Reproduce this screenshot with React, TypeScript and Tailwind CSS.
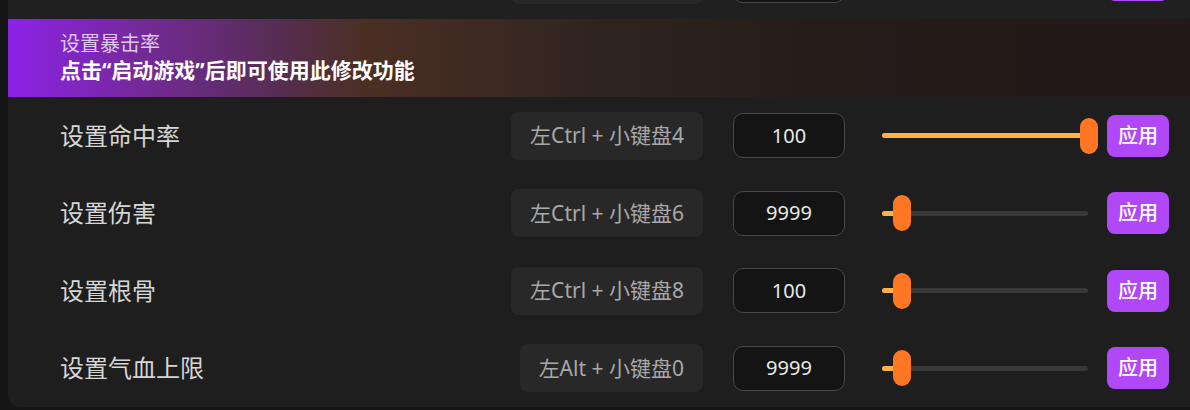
const rows = [
  { label: "设置命中率", keys: "左Ctrl + 小键盘4", value: "100", pos: 198 },
  { label: "设置伤害", keys: "左Ctrl + 小键盘6", value: "9999", pos: 11 },
  { label: "设置根骨", keys: "左Ctrl + 小键盘8", value: "100", pos: 11 },
  { label: "设置气血上限", keys: "左Alt + 小键盘0", value: "9999", pos: 11 },
];

function Row({ label, keys, value, pos }: { label: string; keys: string; value: string; pos: number }) {
  return (
    <div className="flex h-[77.5px] items-center pl-[52px] pr-[21px]">
      <div className="flex-1 text-[24px] text-[#d6d6d6]">{label}</div>
      <div className="flex h-[48px] items-center rounded-[8px] bg-[#282828] px-[19px] text-[21px] text-[#a8a8a8]">
        {keys}
      </div>
      <div className="ml-[30px] flex h-[45px] w-[112px] items-center justify-center rounded-[10px] border border-[#484848] bg-[#141414] text-[20px] text-[#e8e8e8]">
        {value}
      </div>
      {/* slider */}
      <div className="relative ml-[37px] flex h-[36px] w-[206px] items-center">
        <div className="h-[5px] w-full rounded-full bg-[#383838]">
          <div className="h-full rounded-full bg-[#ffb347]" style={{ width: pos + 9 }} />
        </div>
        <div className="absolute top-0 h-[36px] w-[18px] rounded-full bg-[#ff7722]" style={{ left: pos }} />
      </div>
      <button className="ml-[19px] flex h-[42px] w-[62px] items-center justify-center rounded-[8px] bg-[#b048f8] text-[20px] font-medium text-white">
        应用
      </button>
    </div>
  );
}

// bottom edge of the row above, scrolled out of view
function ClippedRow() {
  return (
    <div className="-mt-[58.5px] flex h-[77.5px] items-center bg-[#1f201f] pl-[52px] pr-[21px]">
      <div className="flex-1" />
      <div className="h-[48px] w-[192px] rounded-[8px] bg-[#282828]" />
      <div className="ml-[30px] h-[45px] w-[112px] rounded-[10px] border border-[#484848] bg-[#141414]" />
      <div className="ml-[37px] w-[206px]" />
      <div className="ml-[19px] h-[42px] w-[62px] rounded-[8px] bg-[#b048f8]" />
    </div>
  );
}

export default function App() {
  return (
    <div
      className="h-[410px] w-[1190px] overflow-hidden bg-[#151515]"
      style={{ fontFamily: '"Noto Sans", "Noto Sans CJK SC", sans-serif' }}
    >
      <div className="ml-[8px] h-[407px] overflow-hidden rounded-bl-[12px] bg-[#1e1e1e]">
        <ClippedRow />

        {/* highlighted tip */}
        <div className="h-[78px] bg-[linear-gradient(90deg,#8d22e8_0%,#722a94_12%,#582d58_22%,#4b2f24_30%,#2f2420_50%,#241c19_70%,#221918_100%)] pl-[52px] pt-[12px]">
          <div className="text-[20px] leading-[26px] text-white/75">设置暴击率</div>
          <div className="text-[21px] font-bold leading-[26px] text-white">点击“启动游戏”后即可使用此修改功能</div>
        </div>

        {rows.map((r) => (
          <Row key={r.label} {...r} />
        ))}
      </div>
    </div>
  );
}
